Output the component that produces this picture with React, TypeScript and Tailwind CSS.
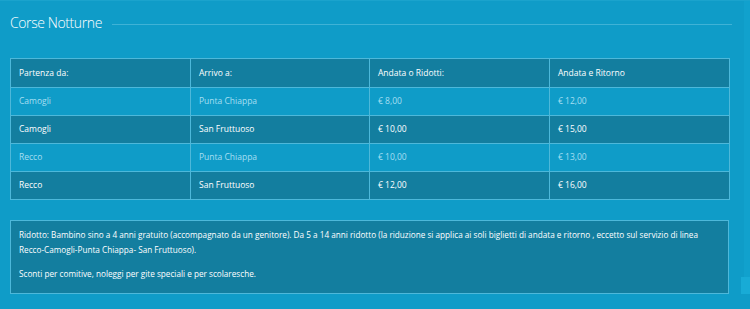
const rows = [
  { from: 'Camogli', to: 'Punta Chiappa', a: '€ 8,00', b: '€ 12,00', dark: false },
  { from: 'Camogli', to: 'San Fruttuoso', a: '€ 10,00', b: '€ 15,00', dark: true },
  { from: 'Recco', to: 'Punta Chiappa', a: '€ 10,00', b: '€ 13,00', dark: false },
  { from: 'Recco', to: 'San Fruttuoso', a: '€ 12,00', b: '€ 16,00', dark: true },
];

export default function App() {
  return (
    <div className="w-[750px] h-[309px] bg-[#0f9cc8] border-t border-[#1aa3cd] overflow-hidden" style={{ fontFamily: '"Open Sans", "Noto Sans", sans-serif' }}>
      <div className="flex">
        <div className="w-[740px] pl-[10px]">
          <div className="flex items-center h-[42px] pt-[1px]">
            <h2 className="text-[14px] font-light text-white tracking-[-0.4px] whitespace-nowrap">Corse Notturne</h2>
            <div className="ml-[10px] mt-[4px] w-[620px] h-px bg-[#3fb2d6]" />
          </div>

          <table className="mt-[15px] w-[719px] border-collapse table-fixed text-[8.5px]">
            <thead>
              <tr className="bg-[#137e9f] h-[29px]">
                <th className="w-[180px] border border-[#4db8da] pl-[8px] text-left font-medium text-white">Partenza da:</th>
                <th className="w-[179px] border border-[#4db8da] pl-[8px] text-left font-medium text-white">Arrivo a:</th>
                <th className="w-[180px] border border-[#4db8da] pl-[8px] text-left font-medium text-white">Andata o Ridotti:</th>
                <th className="w-[180px] border border-[#4db8da] pl-[8px] text-left font-medium text-white">Andata e Ritorno</th>
              </tr>
            </thead>
            <tbody>
              {rows.map((r, i) => (
                <tr key={i} className={r.dark ? 'bg-[#137e9f] h-[28px] text-white font-medium' : 'h-[28px] text-[#a6dff2]'}>
                  <td className="border border-[#4db8da] pl-[8px]">{r.from}</td>
                  <td className="border border-[#4db8da] pl-[8px]">{r.to}</td>
                  <td className="border border-[#4db8da] pl-[8px]">{r.a}</td>
                  <td className="border border-[#4db8da] pl-[8px]">{r.b}</td>
                </tr>
              ))}
            </tbody>
          </table>

          <div className="mt-[20px] w-[719px] h-[74px] bg-[#137e9f] border border-[#4db8da] px-[8px] pt-[6px] text-[8.2px] text-white leading-[15px]">
            <p>
              Ridotto: Bambino sino a 4 anni gratuito (accompagnato da un genitore). Da 5 a 14 anni ridotto (la riduzione si applica ai soli biglietti di andata e ritorno , eccetto sul servizio di linea Recco-Camogli-Punta Chiappa- San Fruttuoso).
            </p>
            <p className="mt-[9px]">Sconti per comitive, noleggi per gite speciali e per scolaresche.</p>
          </div>
        </div>
        <div className="w-[10px] flex flex-col">
          <div className="flex-1 ml-[4px] bg-[#11a1cd]" />
          <div className="h-[17px] ml-[1px] bg-[#18abd6]" />
        </div>
      </div>
    </div>
  );
}
